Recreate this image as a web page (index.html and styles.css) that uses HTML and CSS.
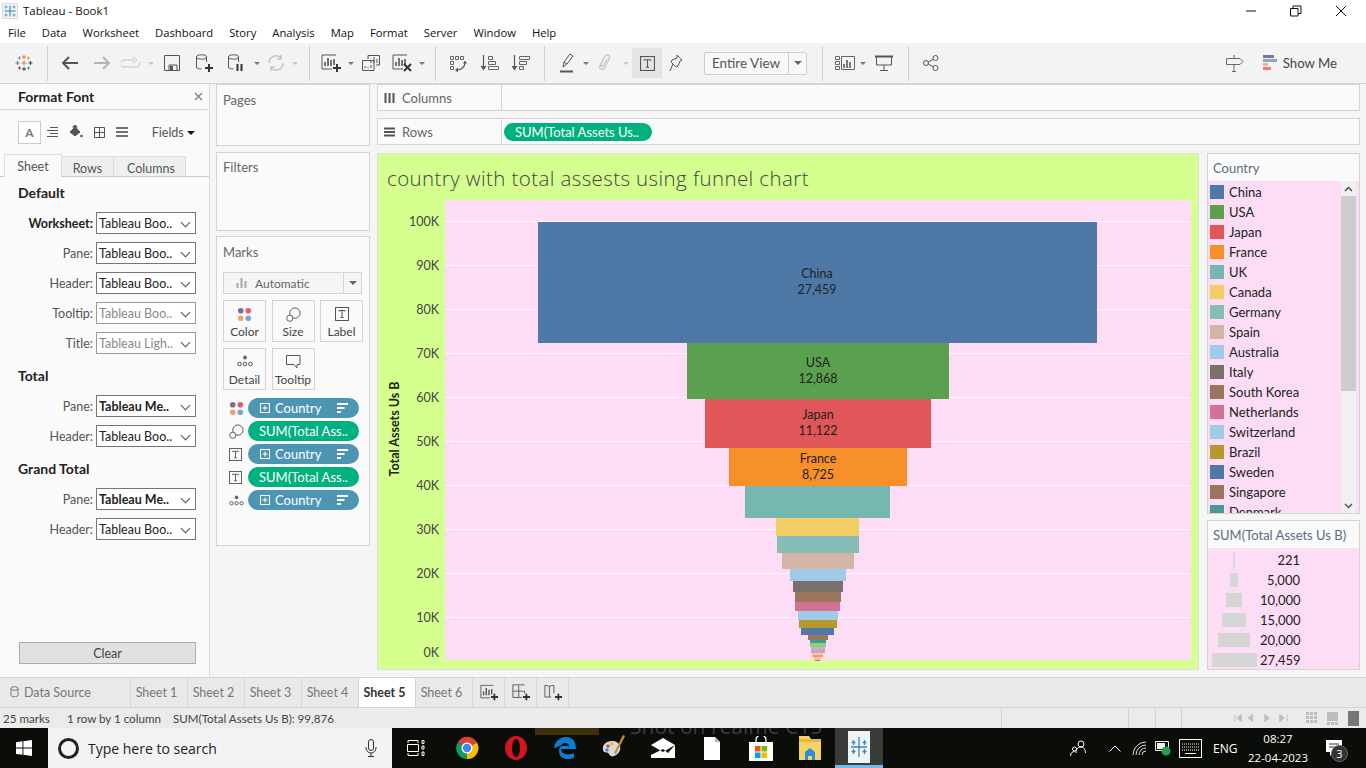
FILE: index.html
```html
<!DOCTYPE html>
<html lang="en">
<head>
    <meta charset="UTF-8">
    <title>Tableau - Book1</title>
    <link rel="stylesheet" href="styles.css">
</head>
<body>
    <!-- shared icons -->
    <svg class="defs" width="0" height="0">
        <symbol id="logo" viewBox="0 0 16 16">
            <rect x=".5" y=".5" width="15" height="15" fill="#eef4f8" stroke="#d5dde2"/>
            <g fill="none" stroke-width="1.100">
                <path d="M8 2.500v11M2.500 8h11" stroke="#3f7fa8"/>
                <path d="M4 2.500v3M2.500 4h3M12 2.500v3M10.500 4h3M4 10.500v3M2.500 12h3M12 10.500v3M10.500 12h3" stroke="#5ea3c4"/>
            </g>
        </symbol>
        <symbol id="logo-color" viewBox="0 0 18 18">
            <g fill="none" stroke-width="1">
                <path d="M9 1v4M7 3h4" stroke="#e8762b"/>
                <path d="M9 6.500v5M6.500 9h5" stroke="#e8762b"/>
                <path d="M9 13v4M7 15h4" stroke="#1f447b"/>
                <path d="M2.500 7v4M.5 9h4" stroke="#59879b"/>
                <path d="M15.500 7v4M13.500 9h4" stroke="#1f447b"/>
                <path d="M4.500 2.500v3M3 4h3" stroke="#7099a6"/>
                <path d="M13.500 2.500v3M12 4h3" stroke="#eb912b"/>
                <path d="M4.500 12.500v3M3 14h3" stroke="#c72035"/>
                <path d="M13.500 12.500v3M12 14h3" stroke="#5b879b"/>
            </g>
        </symbol>
        <symbol id="dots" viewBox="0 0 16 16">
            <circle cx="4" cy="4" r="3" fill="#7b6a94"/>
            <circle cx="12" cy="4" r="3" fill="#e8596b"/>
            <circle cx="4" cy="12" r="3" fill="#f2a16c"/>
            <circle cx="12" cy="12" r="3" fill="#7fa4cf"/>
        </symbol>
        <symbol id="size" viewBox="0 0 16 16">
            <g fill="none" stroke="#555" stroke-width="1">
                <circle cx="9.500" cy="6.500" r="5.500"/>
                <circle cx="4" cy="12" r="3.300" fill="#fafafa"/>
            </g>
        </symbol>
        <symbol id="tbox" viewBox="0 0 14 14">
            <rect x=".5" y=".5" width="13" height="13" fill="none" stroke="#555"/>
            <path d="M4 4.500v-1h6v1M7 3.500v7M5.500 10.500h3" fill="none" stroke="#555"/>
        </symbol>
        <symbol id="detail" viewBox="0 0 16 12">
            <circle cx="8" cy="2.500" r="2" fill="#666"/>
            <g fill="none" stroke="#555">
                <circle cx="2.500" cy="9" r="1.800"/>
                <circle cx="8" cy="9" r="1.800"/>
                <circle cx="13.500" cy="9" r="1.800"/>
            </g>
        </symbol>
        <symbol id="expand" viewBox="0 0 10 10">
            <rect x=".5" y=".5" width="9" height="9" fill="none" stroke="#fff"/>
            <path d="M5 2.500v5M2.500 5h5" stroke="#fff"/>
        </symbol>
        <symbol id="sortbars" viewBox="0 0 11 10">
            <path d="M0 1h11M0 5h7.500M0 9h4" stroke="#fff" stroke-width="2"/>
        </symbol>
        <symbol id="barsheet" viewBox="0 0 20 18">
            <path d="M15 1H1v14h10" fill="none" stroke="#555"/>
            <path d="M4 12V8M7 12V4M10 12V6M13 11V5" stroke="#555" stroke-width="1.600"/>
        </symbol>
        <symbol id="plus" viewBox="0 0 8 8">
            <path d="M4 0v8M0 4h8" stroke="#333" stroke-width="2"/>
        </symbol>
    </svg>

    <header class="titlebar">
        <svg class="title-logo" width="16" height="16"><use href="#logo"/></svg>
        <span class="title-text">Tableau - Book1</span>
        <div class="win-controls">
            <svg width="12" height="12" viewBox="0 0 12 12"><path d="M1 6h10" stroke="#111"/></svg>
            <svg width="12" height="12" viewBox="0 0 12 12"><path d="M.5 3.500h7.500v7.500h-7.500zM3 3.500v-2.500h8v7.500h-3" fill="none" stroke="#111"/></svg>
            <svg width="12" height="12" viewBox="0 0 12 12"><path d="M1 1l10 10M11 1l-10 10" stroke="#111"/></svg>
        </div>
    </header>

    <nav class="menubar">
        <span>File</span><span>Data</span><span>Worksheet</span><span>Dashboard</span><span>Story</span><span>Analysis</span><span>Map</span><span>Format</span><span>Server</span><span>Window</span><span>Help</span>
    </nav>

    <div class="toolbar">
        <div class="tb tb47"><svg width="18" height="18"><use href="#logo-color"/></svg></div>
        <i class="sep"></i>
        <div class="tb-group g1">
            <div class="tb w32"><svg width="18" height="14" viewBox="0 0 18 14"><path d="M17 7H2M8 1L2 7l6 6" fill="none" stroke="#555" stroke-width="2"/></svg></div>
            <div class="tb w32"><svg width="18" height="14" viewBox="0 0 18 14"><path d="M1 7h15M10 1l6 6-6 6" fill="none" stroke="#b5b5b5" stroke-width="2"/></svg></div>
            <div class="tb w26"><svg width="20" height="12" viewBox="0 0 20 12"><path d="M13 3H3a2 2 0 0 0 0 7h13a3 3 0 0 0 2-5M12 0l4 3-4 3" fill="none" stroke="#c4c4c4"/></svg></div>
            <div class="tb w14"><i class="caret off"></i></div>
            <div class="tb w28"><svg width="16" height="16" viewBox="0 0 16 16"><path d="M.5.500h15v15h-15zM5 15V10h8v5" fill="none" stroke="#555"/><rect x="6" y="11" width="3" height="4" fill="#555"/></svg></div>
            <div class="tb w36"><svg width="18" height="18" viewBox="0 0 18 18"><ellipse cx="6.500" cy="3" rx="5" ry="2.200" fill="none" stroke="#555"/><path d="M1.500 3v10c0 1.500 2 2 5 2M11.500 3v5" fill="none" stroke="#555"/><use href="#plus" x="10" y="10" width="8" height="8"/></svg></div>
            <div class="tb w28"><svg width="18" height="18" viewBox="0 0 18 18"><ellipse cx="6.500" cy="3" rx="5" ry="2.200" fill="none" stroke="#555"/><path d="M1.500 3v10c0 1.500 2 2 5 2M11.500 3v5" fill="none" stroke="#555"/><path d="M10.500 10v7M14.500 10v7" stroke="#333" stroke-width="2"/></svg></div>
            <div class="tb w14"><i class="caret"></i></div>
            <div class="tb w24"><svg width="18" height="16" viewBox="0 0 18 16"><path d="M2 8a7 7 0 0 1 12-5M16 8a7 7 0 0 1-12 5M14 0v4h-4M4 16v-4h4" fill="none" stroke="#c4c4c4" stroke-width="1.500"/></svg></div>
            <div class="tb w14"><i class="caret off"></i></div>
        </div>
        <i class="sep"></i>
        <div class="tb-group g2">
            <div class="tb w26"><svg width="20" height="18"><use href="#barsheet"/><use href="#plus" x="12" y="10" width="8" height="8"/></svg></div>
            <div class="tb w14"><i class="caret"></i></div>
            <div class="tb w26"><svg width="18" height="16" viewBox="0 0 18 16"><path d="M6 4V.5h11.500V10H14M.5 5.500H12V15.500H.5z" fill="#f3f3f3" stroke="#555"/><path d="M9 8V5M12 8V2M15 8V4M3 13v-2M6 13v-1M9 13v-3" stroke="#555"/></svg></div>
            <div class="tb w26 ml5"><svg width="20" height="18"><use href="#barsheet"/><path d="M12 10l7 7M19 10l-7 7" stroke="#333" stroke-width="2"/></svg></div>
            <div class="tb w14"><i class="caret"></i></div>
        </div>
        <i class="sep"></i>
        <div class="tb-group g3">
            <div class="tb w32"><svg width="20" height="18" viewBox="0 0 20 18"><path d="M2.500 2.500h3v3h-3zM7.500 2.500h3v3h-3zM12.500 2.500h3v3h-3zM2.500 7.500h3v3h-3zM2.500 12.500h3v3h-3z" fill="none" stroke="#666"/><path d="M17 9c0 4-4 7-8 7" fill="none" stroke="#555" stroke-width="1.200"/><path d="M15 9.500l2-3 2 3zM10 13.500v5l-3-2.500z" fill="#555"/></svg></div>
            <div class="tb w32"><svg width="20" height="18" viewBox="0 0 20 18"><path d="M3.500 1v12" stroke="#555" stroke-width="1.200"/><path d="M.5 12h6l-3 4.500z" fill="#555"/><path d="M8.500 2.500h4v3h-4zM8.500 7.500h7v3h-7zM8.500 12.500h10v3h-10z" fill="none" stroke="#666"/></svg></div>
            <div class="tb w30"><svg width="20" height="18" viewBox="0 0 20 18"><path d="M3.500 1v12" stroke="#555" stroke-width="1.200"/><path d="M.5 12h6l-3 4.500z" fill="#555"/><path d="M8.500 2.500h10v3h-10zM8.500 7.500h7v3h-7zM8.500 12.500h4v3h-4z" fill="none" stroke="#666"/></svg></div>
        </div>
        <i class="sep"></i>
        <div class="tb-group g4">
            <div class="tb w26"><svg width="14" height="20" viewBox="0 0 14 20"><path d="M3 14l1-5 6-8 3 2-6 8zM4 9l3 2" fill="none" stroke="#555"/><path d="M0 18.500h13" stroke="#555" stroke-width="2"/></svg></div>
            <div class="tb w12"><i class="caret"></i></div>
            <div class="tb w26"><svg width="14" height="18" viewBox="0 0 14 18"><path d="M5 5l-3 7c-1 3 3 5 4.500 2l5-10c1-3-3-4-4.500-2L3 10c-1 2 1 3 2.500 1.500L9 5" fill="none" stroke="#c4c4c4" stroke-width="1.200"/></svg></div>
            <div class="tb w12 ml2"><i class="caret off"></i></div>
            <div class="tb tb-active"><svg width="17" height="15"><use href="#tbox"/></svg></div>
            <div class="tb w28"><svg width="14" height="18" viewBox="0 0 14 18"><path d="M8 1l5 5-2 1-2 5-2 1-5-5 1-2 5-2zM4 10l-3 7" fill="none" stroke="#555"/></svg></div>
            <div class="zoom-combo">
                <span class="zoom-label">Entire View</span>
                <span class="zoom-arrow"><i class="caret dark"></i></span>
            </div>
        </div>
        <i class="sep"></i>
        <div class="tb-group g5">
            <div class="tb w24"><svg width="20" height="14" viewBox="0 0 20 14"><path d="M.5.500h4v3h-4zM.5 5.500h4v3h-4zM.5 10.500h4v3h-4zM6.500.5h13v13h-13z" fill="none" stroke="#666"/><path d="M9 12V8M12 12V4M15 12V6" stroke="#555" stroke-width="1.500"/></svg></div>
            <div class="tb w12"><i class="caret"></i></div>
            <div class="tb w30"><svg width="18" height="16" viewBox="0 0 18 16"><path d="M0 1.500h18" stroke="#555" stroke-width="2"/><path d="M1.500 2v8h15V2M9 10v5M5 15.500h8" fill="none" stroke="#555"/></svg></div>
        </div>
        <i class="sep"></i>
        <div class="tb share"><svg width="16" height="16" viewBox="0 0 16 16"><g fill="none" stroke="#555"><circle cx="3" cy="8" r="2.500"/><circle cx="12.500" cy="3" r="2.500"/><circle cx="12.500" cy="13" r="2.500"/><path d="M5.300 7l5-2.800M5.300 9l5 2.800"/></g></svg></div>
        <div class="tb-right">
            <svg width="18" height="17" viewBox="0 0 18 17"><path d="M.5 3.500h13.500l3 3-3 3H.5zM8 0v3.500M8 9.500V16M6 16.500h4" fill="none" stroke="#666"/></svg>
            <div class="show-me">
                <svg width="14" height="16" viewBox="0 0 14 16"><rect width="11" height="3" fill="#8b6f9c"/><rect y="4" width="14" height="3" fill="#85a8d0"/><rect y="8" width="5" height="3" fill="#f4b183"/><rect y="12" width="8" height="3" fill="#f4747f"/></svg>
                <span>Show Me</span>
            </div>
        </div>
    </div>

    <main class="workspace">
        <aside class="format-pane">
            <div class="fmt-head"><b>Format Font</b><svg width="9" height="9" viewBox="0 0 9 9"><path d="M1 1l7 7M8 1L1 8" stroke="#777" stroke-width="1.100"/></svg></div>
            <div class="fmt-tools">
                <span class="fmt-a">A</span>
                <svg width="11" height="10" viewBox="0 0 11 10"><path d="M3 .5h8M0 3.500h11M3 6.500h8M0 9.500h11" stroke="#555"/></svg>
                <svg width="14" height="14" viewBox="0 0 14 14"><path d="M1 7l5-5 5 5-5 4zM4 2.500a2 2 0 0 1 4 0" fill="#555" stroke="#555"/><circle cx="12.500" cy="11" r="1.300" fill="#555"/></svg>
                <svg width="11" height="11" viewBox="0 0 11 11"><path d="M.5.500h10v10H.5zM5.500.5v10M.5 5.500h10" fill="none" stroke="#555"/></svg>
                <svg width="12" height="10" viewBox="0 0 12 10"><path d="M0 1h12M0 5h12M0 9h12" stroke="#444" stroke-width="1.500"/></svg>
                <span class="fmt-fields">Fields <i class="caret black"></i></span>
            </div>
            <div class="fmt-tabs">
                <span class="fmt-tab on">Sheet</span><span class="fmt-tab">Rows</span><span class="fmt-tab">Columns</span>
            </div>

            <h3 class="fmt-title first">Default</h3>
            <div class="fmt-row strong"><label>Worksheet:</label><div class="select">Tableau Boo..</div></div>
            <div class="fmt-row"><label>Pane:</label><div class="select">Tableau Boo..</div></div>
            <div class="fmt-row"><label>Header:</label><div class="select">Tableau Boo..</div></div>
            <div class="fmt-row"><label>Tooltip:</label><div class="select dim">Tableau Boo..</div></div>
            <div class="fmt-row"><label>Title:</label><div class="select dim">Tableau Ligh..</div></div>

            <h3 class="fmt-title">Total</h3>
            <div class="fmt-row"><label>Pane:</label><div class="select bold">Tableau Me..</div></div>
            <div class="fmt-row"><label>Header:</label><div class="select">Tableau Boo..</div></div>

            <h3 class="fmt-title">Grand Total</h3>
            <div class="fmt-row"><label>Pane:</label><div class="select bold">Tableau Me..</div></div>
            <div class="fmt-row"><label>Header:</label><div class="select">Tableau Boo..</div></div>

            <button class="clear-btn">Clear</button>
        </aside>

        <section class="cards">
            <div class="card pages">Pages</div>
            <div class="card filters">Filters</div>
            <div class="card marks">
                <div class="marks-title">Marks</div>
                <div class="mark-type">
                    <svg width="11" height="10" viewBox="0 0 11 10"><path d="M1.500 10V5M5.500 10V0M9.500 10V3" stroke="#aaa" stroke-width="2"/></svg>
                    <span>Automatic</span>
                    <span class="mark-arrow"><i class="caret dark"></i></span>
                </div>
                <div class="mark-btns">
                    <div class="mark-btn"><svg width="15" height="15"><use href="#dots"/></svg><span>Color</span></div>
                    <div class="mark-btn"><svg width="15" height="15"><use href="#size"/></svg><span>Size</span></div>
                    <div class="mark-btn"><svg width="14" height="14"><use href="#tbox"/></svg><span>Label</span></div>
                    <div class="mark-btn"><svg width="16" height="12"><use href="#detail"/></svg><span>Detail</span></div>
                    <div class="mark-btn"><svg width="15" height="14" viewBox="0 0 15 14"><path d="M.5.500h13.500v9h-3v3.500l-3-3.500H.5z" fill="none" stroke="#555"/></svg><span>Tooltip</span></div>
                </div>
                <div class="mark-pills">
                    <div class="mark-row"><svg width="15" height="15"><use href="#dots"/></svg><div class="pill blue"><svg width="10" height="10"><use href="#expand"/></svg><span>Country</span><svg width="11" height="10"><use href="#sortbars"/></svg></div></div>
                    <div class="mark-row"><svg width="15" height="15"><use href="#size"/></svg><div class="pill green"><span>SUM(Total Ass..</span></div></div>
                    <div class="mark-row"><svg width="13" height="13"><use href="#tbox"/></svg><div class="pill blue"><svg width="10" height="10"><use href="#expand"/></svg><span>Country</span><svg width="11" height="10"><use href="#sortbars"/></svg></div></div>
                    <div class="mark-row"><svg width="13" height="13"><use href="#tbox"/></svg><div class="pill green"><span>SUM(Total Ass..</span></div></div>
                    <div class="mark-row"><svg width="15" height="11"><use href="#detail"/></svg><div class="pill blue"><svg width="10" height="10"><use href="#expand"/></svg><span>Country</span><svg width="11" height="10"><use href="#sortbars"/></svg></div></div>
                </div>
            </div>
        </section>

        <section class="sheet-area">
            <div class="shelf columns">
                <div class="shelf-label"><svg width="11" height="10" viewBox="0 0 11 10"><path d="M1.500 0v10M5.500 0v10M9.500 0v10" stroke="#555" stroke-width="2"/></svg>Columns</div>
                <div class="shelf-body"></div>
            </div>
            <div class="shelf rows">
                <div class="shelf-label"><svg width="11" height="10" viewBox="0 0 11 10"><path d="M0 1.500h11M0 5h11M0 8.500h11" stroke="#555" stroke-width="2"/></svg>Rows</div>
                <div class="shelf-body"><div class="pill green wide"><span>SUM(Total Assets Us..</span></div></div>
            </div>
            <div class="viz-row">
                <div class="viz">
                    <div class="viz-title">country with total assests using funnel chart</div>
                    <svg class="chart" width="822" height="470" viewBox="377 200 822 470">
                        <rect x="445" y="200" width="746" height="460" fill="#fddcf5"/>
                        <g stroke="#fff" stroke-opacity=".7">
                            <path d="M445 221.500h746M445 265.500h746M445 309.500h746M445 353.500h746M445 397.500h746M445 441.500h746M445 485.500h746M445 529.500h746M445 573.500h746M445 617.500h746"/>
                        </g>
                        <g class="axis" text-anchor="end">
                            <text x="439" y="226">100K</text>
                            <text x="439" y="270">90K</text>
                            <text x="439" y="314">80K</text>
                            <text x="439" y="358">70K</text>
                            <text x="439" y="402">60K</text>
                            <text x="439" y="446">50K</text>
                            <text x="439" y="490">40K</text>
                            <text x="439" y="534">30K</text>
                            <text x="439" y="578">20K</text>
                            <text x="439" y="622">10K</text>
                            <text x="439" y="657">0K</text>
                        </g>
                        <text class="axis-title" transform="translate(399 429) rotate(-90)" text-anchor="middle">Total Assets Us B</text>
                        <rect x="538" y="222" width="559" height="121" fill="#4e79a7"/>
                        <rect x="687" y="343" width="262" height="56" fill="#59a14f"/>
                        <rect x="705" y="399" width="226" height="49" fill="#e15759"/>
                        <rect x="729" y="448" width="178" height="38" fill="#f78f2b"/>
                        <rect x="745" y="486" width="145" height="32" fill="#76b7b2"/>
                        <rect x="776" y="518" width="83" height="18" fill="#f1ce63"/>
                        <rect x="777" y="536" width="82" height="17" fill="#86bcb6"/>
                        <rect x="782" y="553" width="72" height="16" fill="#d4b5a5"/>
                        <rect x="790" y="569" width="56" height="12" fill="#a0cbe8"/>
                        <rect x="793" y="581" width="50" height="11" fill="#79706e"/>
                        <rect x="795" y="592" width="46" height="10" fill="#9c755f"/>
                        <rect x="795" y="602" width="45" height="9" fill="#d37295"/>
                        <rect x="798" y="611" width="40" height="9" fill="#a0cbe8"/>
                        <rect x="799" y="620" width="38" height="8" fill="#b6992d"/>
                        <rect x="801" y="628" width="33" height="7" fill="#4e79a7"/>
                        <rect x="808" y="635" width="20" height="5" fill="#9c755f"/>
                        <rect x="810" y="640" width="16" height="3" fill="#499894"/>
                        <rect x="810" y="643" width="16" height="4" fill="#8cd17d"/>
                        <rect x="811" y="647" width="14" height="3" fill="#d7a6c0"/>
                        <rect x="811" y="650" width="14" height="3" fill="#bab0ac"/>
                        <rect x="812" y="653" width="11" height="2" fill="#fabfd2"/>
                        <rect x="812" y="655" width="11" height="2" fill="#ff9d4b"/>
                        <rect x="814" y="657" width="7" height="3" fill="#ffbe9d"/>
                        <rect x="815" y="660" width="5" height="1" fill="#b07aa1"/>
                        <g class="bar-label" text-anchor="middle">
                            <text x="817" y="278">China</text><text x="817" y="294">27,459</text>
                            <text x="818" y="367">USA</text><text x="818" y="383">12,868</text>
                            <text x="818" y="419">Japan</text><text x="818" y="435">11,122</text>
                            <text x="818" y="463">France</text><text x="818" y="479">8,725</text>
                        </g>
                    </svg>
                </div>
                <div class="legends">
                    <div class="legend country">
                        <div class="legend-title">Country</div>
                        <div class="legend-body">
                            <ul class="legend-list">
                                <li><i class="sw c1"></i>China</li>
                                <li><i class="sw c2"></i>USA</li>
                                <li><i class="sw c3"></i>Japan</li>
                                <li><i class="sw c4"></i>France</li>
                                <li><i class="sw c5"></i>UK</li>
                                <li><i class="sw c6"></i>Canada</li>
                                <li><i class="sw c7"></i>Germany</li>
                                <li><i class="sw c8"></i>Spain</li>
                                <li><i class="sw c9"></i>Australia</li>
                                <li><i class="sw c10"></i>Italy</li>
                                <li><i class="sw c11"></i>South Korea</li>
                                <li><i class="sw c12"></i>Netherlands</li>
                                <li><i class="sw c9"></i>Switzerland</li>
                                <li><i class="sw c13"></i>Brazil</li>
                                <li><i class="sw c1"></i>Sweden</li>
                                <li><i class="sw c11"></i>Singapore</li>
                                <li><i class="sw c14"></i>Denmark</li>
                            </ul>
                            <div class="scrollbar">
                                <span class="sb-btn"><svg width="9" height="6" viewBox="0 0 9 6"><path d="M1 5l3.500-3.500L8 5" fill="none" stroke="#555" stroke-width="1.500"/></svg></span>
                                <span class="sb-thumb"></span>
                                <span class="sb-track"></span>
                                <span class="sb-btn"><svg width="9" height="6" viewBox="0 0 9 6"><path d="M1 1l3.500 3.500L8 1" fill="none" stroke="#555" stroke-width="1.500"/></svg></span>
                            </div>
                        </div>
                    </div>
                    <div class="legend sizes">
                        <div class="legend-title">SUM(Total Assets Us B)</div>
                        <div class="size-body">
                            <div class="size-row"><span class="size-cell"><i class="s1"></i></span><span class="size-val">221</span></div>
                            <div class="size-row"><span class="size-cell"><i class="s2"></i></span><span class="size-val">5,000</span></div>
                            <div class="size-row"><span class="size-cell"><i class="s3"></i></span><span class="size-val">10,000</span></div>
                            <div class="size-row"><span class="size-cell"><i class="s4"></i></span><span class="size-val">15,000</span></div>
                            <div class="size-row"><span class="size-cell"><i class="s5"></i></span><span class="size-val">20,000</span></div>
                            <div class="size-row"><span class="size-cell"><i class="s6"></i></span><span class="size-val">27,459</span></div>
                        </div>
                    </div>
                </div>
            </div>
        </section>
    </main>

    <div class="tabbar">
        <div class="tab source"><svg width="9" height="12" viewBox="0 0 9 12"><ellipse cx="4.500" cy="2.500" rx="3.500" ry="1.800" fill="none" stroke="#777"/><path d="M1 2.500v7c0 1.500 7 1.500 7 0v-7" fill="none" stroke="#777"/></svg>Data Source</div>
        <div class="tab">Sheet 1</div>
        <div class="tab">Sheet 2</div>
        <div class="tab">Sheet 3</div>
        <div class="tab">Sheet 4</div>
        <div class="tab active">Sheet 5</div>
        <div class="tab">Sheet 6</div>
        <div class="tab icon"><svg width="18" height="17" viewBox="0 0 20 18"><use href="#barsheet"/><use href="#plus" x="12" y="10" width="8" height="8"/></svg></div>
        <div class="tab icon"><svg width="18" height="17" viewBox="0 0 20 18"><path d="M14 .5H1v14h10M7.500 1v13M1 7.500h13V10" fill="none" stroke="#555"/><use href="#plus" x="12" y="10" width="8" height="8"/></svg></div>
        <div class="tab icon"><svg width="18" height="17" viewBox="0 0 20 18"><path d="M1 1l5 1 5-1v9M1 1v13h7M6 2v12" fill="none" stroke="#555"/><use href="#plus" x="12" y="10" width="8" height="8"/></svg></div>
    </div>

    <div class="statusbar">
        <span class="st-marks">25 marks</span>
        <span class="st-dims">1 row by 1 column</span>
        <span>SUM(Total Assets Us B): 99,876</span>
        <div class="st-cells">
            <i class="st-cell a"></i><i class="st-cell b"></i><i class="st-cell b"></i><i class="st-cell c"></i>
            <div class="st-nav">
                <svg width="56" height="10" viewBox="0 0 60 10"><path d="M1 1v8M8 1L3 5l5 4zM20 1l-5 4 5 4zM33 1l5 4-5 4zM49 1l5 4-5 4zM57 1v8" fill="#c0c0c0" stroke="#c0c0c0"/></svg>
            </div>
            <div class="st-views">
                <svg width="11" height="12" viewBox="0 0 11 12"><path d="M0 1.500h11M0 5.500h11M0 9.500h11" stroke="#bdbdbd" stroke-width="3" stroke-dasharray="3 1"/></svg>
                <svg width="11" height="13" viewBox="0 0 11 13"><rect width="11" height="9" fill="#bdbdbd"/><path d="M0 11.500h11" stroke="#bdbdbd" stroke-width="3" stroke-dasharray="3 1"/></svg>
                <svg width="11" height="15"><rect width="11" height="15" fill="#777"/></svg>
            </div>
        </div>
    </div>

    <footer class="taskbar">
        <div class="wall-text">Shot on realme C15</div>
        <i class="wall-tag"></i>
        <div class="start"><svg width="16" height="16" viewBox="0 0 16 16"><path d="M0 2.200l6.500-.9v6.300H0zM7.400 1.200L16 0v7.600H7.400zM0 8.500h6.500v6.300L0 13.900zM7.400 8.500H16V16l-8.600-1.200z" fill="#fff"/></svg></div>
        <div class="search">
            <span class="cortana"></span>
            <span class="search-text">Type here to search</span>
            <svg class="mic" width="12" height="18" viewBox="0 0 12 18"><rect x="3.500" y=".5" width="5" height="11" rx="2.500" fill="none" stroke="#333"/><path d="M1 8v1a5 5 0 0 0 10 0V8M6 14v3M3 17.500h6" fill="none" stroke="#333"/></svg>
        </div>
        <div class="task-icons">
            <div class="task w48"><svg width="18" height="16" viewBox="0 0 18 16"><path d="M1 3V.5h10V3M1 13v2.500h10V13M.5 4.500h11v7H.5zM15 .5h2v3h-2zM15 6h2v3h-2zM15 12h2v3.500h-2z" fill="none" stroke="#fff"/></svg></div>
            <div class="task"><svg width="24" height="24" viewBox="0 0 24 24"><path d="M12 12L3 6a11 11 0 0 1 19 .5z" fill="#db4437"/><path d="M12 12l10-5.500A11 11 0 0 1 12 23z" fill="#fbbc05"/><path d="M12 12v11A11 11 0 0 1 3 6z" fill="#0f9d58"/><circle cx="12" cy="12" r="5.500" fill="#fff"/><circle cx="12" cy="12" r="4.200" fill="#4285f4"/></svg></div>
            <div class="task"><svg width="22" height="24" viewBox="0 0 22 24"><path fill-rule="evenodd" d="M11 0c6 0 11 5.400 11 12s-5 12-11 12S0 18.600 0 12 5 0 11 0zm0 3C8.500 3 7 7 7 12s1.500 9 4 9 4-4 4-9-1.500-9-4-9z" fill="#d4141e"/></svg></div>
            <div class="task"><svg width="22" height="22" viewBox="0 0 22 22"><path d="M0 11C1 4 6 0 12 0c6 0 10 4 10 12H7c0 5 7 7 13 4v5c-8 3-15 0-15-7 0-3 2-5 3-6-4 1-6 3-8 3zM7 9h8c0-4-7-4-8 0z" fill="#0c7cd5"/></svg></div>
            <div class="task"><svg width="24" height="26" viewBox="0 0 24 26"><path d="M10 6C4 6 0 10 1 15c1 4 5 1 6 4 1 2 3 3 5 2 5-2 7-6 6-10-1-3-4-5-8-5z" fill="#dcdcdc"/><circle cx="6" cy="11" r="1.800" fill="#e04b3c"/><circle cx="10" cy="9" r="1.800" fill="#f2b632"/><circle cx="5" cy="15" r="1.800" fill="#3b8fd8"/><path d="M21 0l2 1-9 18-2-1z" fill="#c98b3c"/></svg></div>
            <div class="task"><svg width="24" height="20" viewBox="0 0 24 20"><path d="M0 7l12-7 12 7v13H0z" fill="#fff"/><path d="M0 7l12 7 12-7-7 8-5-4-12 6z" fill="#111"/></svg></div>
            <div class="task"><svg width="16" height="23" viewBox="0 0 16 23"><path d="M0 0h11l5 5v18H0z" fill="#fff"/><path d="M11 0v5h5" fill="#bbb"/></svg></div>
            <div class="task"><svg width="24" height="25" viewBox="0 0 24 25"><path d="M7 7V4a5 5 0 0 1 10 0v3" fill="none" stroke="#fff" stroke-width="1.300"/><rect y="6" width="24" height="19" fill="#fff"/><rect x="6" y="10" width="5.500" height="5.500" fill="#f25022"/><rect x="12.500" y="10" width="5.500" height="5.500" fill="#7fba00"/><rect x="6" y="16.500" width="5.500" height="5.500" fill="#00a4ef"/><rect x="12.500" y="16.500" width="5.500" height="5.500" fill="#ffb900"/></svg></div>
            <div class="task"><svg width="22" height="24" viewBox="0 0 22 24"><path d="M0 0h10l2 3h10v21H0z" fill="#f6d365"/><path d="M0 3h22v3H0z" fill="#e8b93a"/><path d="M6 16l5-4 5 4v8h-3v-4H9v4H6z" fill="#2b8fd8"/></svg></div>
            <div class="task active"><svg width="22" height="32" viewBox="0 0 22 32"><rect width="22" height="32" fill="#eef3f6"/><g fill="none" stroke="#3f86b3" stroke-width="1.300"><path d="M11 6v20M3 16h16M5.500 9v5M3.500 11.500h4M16.500 9v5M14.500 11.500h4M5.500 18v5M3.500 20.500h4M16.500 18v5M14.500 20.500h4"/></g></svg></div>
        </div>
        <div class="tray">
            <svg class="t-people" width="16" height="17" viewBox="0 0 16 17"><g fill="none" stroke="#fff"><circle cx="11" cy="4" r="3"/><path d="M6 13c0-4 2-6 5-6s4 2 4.500 6"/><circle cx="4.500" cy="9" r="2"/><path d="M.5 16c0-3 2-4.500 4-4.500"/></g></svg>
            <svg class="t-up" width="12" height="7" viewBox="0 0 12 7"><path d="M.5 6.500L6 1l5.500 5.500" fill="none" stroke="#fff"/></svg>
            <svg class="t-wifi" width="14" height="16" viewBox="0 0 14 16"><path d="M1 15a13 13 0 0 1 13-13M4 15a10 10 0 0 1 10-10M7 15a7 7 0 0 1 7-7M10 15a4 4 0 0 1 4-4" fill="none" stroke="#ddd"/></svg>
            <svg class="t-batt" width="16" height="16" viewBox="0 0 16 16"><path d="M.5 1.500h13v9H.5z" fill="#111" stroke="#eee"/><rect x="2" y="3" width="8" height="6" fill="#eee"/><circle cx="11" cy="11" r="4.500" fill="#1ca54a"/></svg>
            <svg class="t-kbd" width="23" height="19" viewBox="0 0 23 19"><path d="M.5.500h22v18H.5z" fill="none" stroke="#fff"/><path d="M3 5h17M3 8h17M3 11h17" stroke="#fff" stroke-dasharray="1 1"/><path d="M6 14.500h11" stroke="#fff"/></svg>
            <span class="t-lang">ENG</span>
            <div class="t-clock"><span>08:27</span><span>22-04-2023</span></div>
            <div class="t-notif">
                <svg width="16" height="17" viewBox="0 0 16 17"><path d="M0 0h16v12H8l-4 4v-4H0z" fill="#fff"/><path d="M3 4h10M3 7h10" stroke="#333"/></svg>
                <span class="badge">3</span>
            </div>
        </div>
    </footer>
</body>
</html>
```

FILE: styles.css
```css
* {
    box-sizing: border-box;
}
html, body {
    margin: 0;
    padding: 0;
    height: 768px;
    overflow: hidden;
}
body {
    width: 1366px;
    display: flex;
    flex-direction: column;
    background-color: #f5f5f5;
    color: #333;
    font-family: "Lato", "Noto Sans", sans-serif;
    font-size: 12.500px;
}
svg {
    display: block;
    flex: none;
}
i {
    display: block;
    font-style: normal;
}
.defs {
    position: absolute;
}

/* window chrome */
.titlebar {
    height: 21px;
    flex: none;
    display: flex;
    align-items: center;
    background-color: #fff;
    font-family: "Open Sans", sans-serif;
    font-size: 11.500px;
    color: #111;
    padding-left: 2px;
}
.title-logo {
    margin-right: 5px;
}
.win-controls {
    margin-left: auto;
    display: flex;
    align-items: center;
    padding-right: 19px;
    gap: 33px;
    padding-top: 1px;
}
.menubar {
    height: 22px;
    flex: none;
    display: flex;
    align-items: center;
    gap: 16px;
    padding-left: 8px;
    background-color: #fff;
    font-family: "Open Sans", sans-serif;
    font-size: 11.250px;
    color: #111;
}

/* toolbar */
.toolbar {
    height: 41px;
    flex: none;
    display: flex;
    align-items: center;
    background-color: #f3f3f3;
    border-bottom: 1px solid #d4d4d4;
}
.sep {
    width: 1px;
    height: 35px;
    background-color: #d0d0d0;
    flex: none;
}
.tb-group {
    display: flex;
    align-items: center;
}
.g1 { padding: 0 7px 0 6px; }
.g2 { padding: 0 6px 0 8px; }
.g3 { padding: 0 8px 0 6px; }
.g4 { padding: 0 15px 0 9px; }
.g5 { padding: 0 9px 0 10px; }
.tb {
    display: flex;
    align-items: center;
    justify-content: center;
    height: 30px;
    flex: none;
}
.tb47 { width: 47px; }
.w12 { width: 12px; }
.w14 { width: 14px; }
.w24 { width: 24px; }
.w26 { width: 26px; }
.w28 { width: 28px; }
.w30 { width: 30px; }
.w32 { width: 32px; }
.w36 { width: 36px; }
.ml2 { margin-left: 2px; }
.ml5 { margin-left: 5px; }
.tb-active {
    width: 30px;
    background-color: #e4e4e4;
}
.share {
    width: 44px;
}
.caret {
    width: 0;
    height: 0;
    border-left: 3px solid transparent;
    border-right: 3px solid transparent;
    border-top: 3px solid #777;
}
.caret.off {
    border-top-color: #c6c6c6;
}
.caret.dark {
    border-left-width: 4px;
    border-right-width: 4px;
    border-top: 4px solid #666;
}
.caret.black {
    display: inline-block;
    border-left-width: 4px;
    border-right-width: 4px;
    border-top: 4px solid #111;
    vertical-align: 2px;
}
.zoom-combo {
    width: 103px;
    height: 23px;
    margin-left: 14px;
    display: flex;
    background-color: #f8f8f8;
    border: 1px solid #cfcfcf;
    border-radius: 2px;
    color: #555;
}
.zoom-label {
    flex: 1;
    padding-left: 7px;
    line-height: 20px;
    font-size: 13.500px;
}
.zoom-arrow {
    width: 18px;
    border-left: 1px solid #cfcfcf;
    display: flex;
    align-items: center;
    justify-content: center;
}
.tb-right {
    margin-left: auto;
    display: flex;
    align-items: center;
    gap: 19px;
    padding-right: 29px;
}
.show-me {
    display: flex;
    align-items: center;
    gap: 6px;
    color: #444;
    font-size: 13.200px;
}

/* main area */
.workspace {
    flex: 1;
    display: flex;
    min-height: 0;
    border-bottom: 1px solid #d4d4d4;
}
.format-pane {
    width: 210px;
    flex: none;
    display: flex;
    flex-direction: column;
    background-color: #fafafa;
    border-right: 1px solid #dcdcdc;
}
.fmt-head {
    height: 26px;
    flex: none;
    display: flex;
    align-items: center;
    justify-content: space-between;
    padding: 0 6px 0 18px;
    border-bottom: 1px solid #d9d9d9;
    font-size: 14px;
    color: #222;
}
.fmt-tools {
    height: 44px;
    flex: none;
    display: flex;
    align-items: center;
    padding-left: 18px;
    gap: 11px;
}
.fmt-a {
    width: 23px;
    height: 23px;
    margin-right: -5.500px;
    border: 1px solid #ccc;
    text-align: center;
    line-height: 22px;
    font-weight: 700;
    font-size: 12px;
    color: #777;
    background-color: #fff;
}
.fmt-fields {
    margin-left: auto;
    padding-right: 14px;
    color: #555;
    white-space: nowrap;
}
.fmt-tabs {
    height: 23px;
    flex: none;
    display: flex;
    align-items: flex-end;
    padding-left: 4px;
    border-bottom: 1px solid #ccc;
}
.fmt-tab {
    height: 20px;
    line-height: 23px;
    padding: 0 12px;
    background-color: #efefef;
    border: 1px solid #ddd;
    border-bottom: none;
    border-left: none;
    color: #555;
}
.fmt-tab:nth-child(2) { width: 52px; padding: 0; text-align: center; }
.fmt-tab:nth-child(3) { width: 72px; padding: 0 0 0 3px; text-align: center; }
.fmt-tab.on {
    width: 58px;
    height: 23px;
    padding: 0;
    margin-bottom: -1px;
    line-height: 24px;
    text-align: center;
    background-color: #fafafa;
    border: 1px solid #ddd;
    border-bottom: none;
}
.fmt-title {
    margin: 8px 0 5px 18px;
    height: 20px;
    line-height: 20px;
    font-size: 14px;
    font-weight: 700;
    color: #222;
}
.fmt-title.first {
    margin-top: 6px;
}
.fmt-row {
    height: 30px;
    flex: none;
    display: flex;
    align-items: center;
}
.fmt-row label {
    width: 93px;
    text-align: right;
    color: #555;
}
.fmt-row.strong label {
    color: #222;
    font-weight: 700;
}
.select {
    width: 100px;
    height: 22px;
    margin-left: 3px;
    padding-left: 2px;
    line-height: 21px;
    position: relative;
    background-color: #fff;
    border: 1px solid #767676;
    color: #222;
}
.select::after {
    content: "";
    position: absolute;
    right: 6px;
    top: 6px;
    width: 6px;
    height: 6px;
    border-right: 1px solid #555;
    border-bottom: 1px solid #555;
    transform: rotate(45deg);
}
.select.dim {
    color: #888;
    border-color: #9a9a9a;
}
.select.bold {
    font-weight: 700;
}
.clear-btn {
    margin: auto 0 13px 19px;
    width: 177px;
    height: 22px;
    background-color: #e1e1e1;
    border: 1px solid #adadad;
    font-family: inherit;
    font-size: 12.500px;
    color: #444;
}

/* pages, filters, marks */
.cards {
    width: 154px;
    flex: none;
    margin: 0 7px 0 6px;
    display: flex;
    flex-direction: column;
}
.card {
    background-color: #fafafa;
    border: 1px solid #d4d4d4;
    color: #666;
    padding: 7px 6px;
    font-size: 13px;
}
.pages { height: 62px; margin-bottom: 6px; }
.filters { height: 79px; margin-bottom: 5px; padding-top: 6px; }
.marks { height: 310px; padding-top: 6px; }
.marks-title {
    height: 18px;
    line-height: 18px;
}
.mark-type {
    height: 22px;
    margin-top: 11px;
    display: flex;
    align-items: center;
    padding-left: 12px;
    gap: 8px;
    background-color: #f5f5f5;
    border: 1px solid #d4d4d4;
    font-size: 12px;
    color: #666;
    width: 139px;
}
.mark-arrow {
    margin-left: auto;
    width: 18px;
    height: 100%;
    border-left: 1px solid #d4d4d4;
    display: flex;
    align-items: center;
    justify-content: center;
}
.mark-btns {
    margin-top: 6px;
    display: grid;
    grid-template-columns: repeat(3, 43px);
    column-gap: 5.500px;
    row-gap: 6px;
}
.mark-btn {
    height: 42px;
    display: flex;
    flex-direction: column;
    align-items: center;
    justify-content: space-between;
    padding: 6px 0 2px;
    border: 1px solid #d4d4d4;
    font-size: 12px;
    color: #444;
}
.mark-pills {
    margin-top: 8px;
    padding: 0 4px 0 6px;
    display: flex;
    flex-direction: column;
    gap: 3px;
}
.mark-row {
    height: 20px;
    display: flex;
    align-items: center;
    justify-content: space-between;
}
.pill {
    height: 20px;
    width: 111px;
    border-radius: 10px;
    display: flex;
    align-items: center;
    color: #fff;
    font-size: 13px;
}
.pill.blue {
    background-color: #4e95b4;
    padding: 0 11px 0 12px;
}
.pill.blue span {
    flex: 1;
    padding-left: 5px;
}
.pill.green {
    background-color: #00b180;
    padding-left: 11px;
    white-space: nowrap;
}
.pill.wide {
    width: 148px;
    height: 18px;
}

/* shelves and view */
.sheet-area {
    flex: 1;
    min-width: 0;
    padding-right: 6px;
    display: flex;
    flex-direction: column;
}
.shelf {
    height: 27px;
    flex: none;
    display: flex;
    background-color: #fafafa;
    border: 1px solid #d4d4d4;
    color: #666;
    font-size: 13px;
}
.rows {
    margin-top: 7px;
}
.shelf-label {
    width: 124px;
    display: flex;
    align-items: center;
    gap: 7px;
    padding-left: 6px;
    border-right: 1px solid #d4d4d4;
}
.shelf-body {
    flex: 1;
    display: flex;
    align-items: center;
    padding-left: 2px;
}
.viz-row {
    margin-top: 8px;
    display: flex;
    gap: 8px;
}
.viz {
    width: 822px;
    height: 517px;
    background-color: #d5ff8f;
    border: 1px solid #dcdcdc;
    overflow: hidden;
    flex: none;
}
.viz-title {
    height: 46px;
    padding: 10px 0 0 9px;
    font-family: "Open Sans", "Lato", sans-serif;
    font-size: 20.500px;
    font-weight: 300;
    line-height: 28px;
    letter-spacing: .4px;
    color: #444;
}
.chart {
    margin-left: -1px;
}
.axis {
    font-size: 12.500px;
    fill: #444;
    font-family: "Lato", sans-serif;
}
.axis-title {
    font-size: 12.500px;
    font-weight: 700;
    fill: #222;
}
.bar-label {
    font-size: 12.500px;
    fill: #222;
}

/* legends */
.legends {
    flex: 1;
    display: flex;
    flex-direction: column;
    gap: 6px;
}
.legend {
    background-color: #fafafa;
    border: 1px solid #d4d4d4;
    color: #222;
    overflow: hidden;
    font-size: 13px;
}
.legend-title {
    height: 27px;
    line-height: 28px;
    padding-left: 5px;
    color: #5d6d7e;
}
.country { height: 361px; }
.sizes { height: 150px; }
.legend-body {
    height: 332px;
    display: flex;
    background-color: #fddcf5;
}
.legend-list {
    list-style: none;
    margin: 0;
    padding: 1px 0 0 2px;
    flex: 1;
    overflow: hidden;
}
.legend-list li {
    height: 20px;
    display: flex;
    align-items: center;
    gap: 5px;
}
.sw {
    width: 14px;
    height: 14px;
}
.c1 { background-color: #4e79a7; }
.c2 { background-color: #59a14f; }
.c3 { background-color: #e15759; }
.c4 { background-color: #f78f2b; }
.c5 { background-color: #76b7b2; }
.c6 { background-color: #f1ce63; }
.c7 { background-color: #86bcb6; }
.c8 { background-color: #d4b5a5; }
.c9 { background-color: #a0cbe8; }
.c10 { background-color: #79706e; }
.c11 { background-color: #9c755f; }
.c12 { background-color: #d37295; }
.c13 { background-color: #b6992d; }
.c14 { background-color: #499894; }
.scrollbar {
    width: 15px;
    margin-right: 3px;
    display: flex;
    flex-direction: column;
    background-color: #f0f0f0;
}
.sb-btn {
    height: 15px;
    flex: none;
    display: flex;
    align-items: center;
    justify-content: center;
}
.sb-thumb {
    height: 195px;
    flex: none;
    background-color: #cdcdcd;
}
.sb-track {
    flex: 1;
}
.size-body {
    height: 122px;
    background-color: #fddcf5;
    padding-top: 2px;
}
.size-row {
    height: 20px;
    display: flex;
    align-items: center;
}
.size-cell {
    width: 52px;
    display: flex;
    justify-content: center;
}
.size-cell i {
    height: 14px;
    background-color: #d6d6d6;
}
.s1 { width: 2px; }
.s2 { width: 8px; }
.s3 { width: 16px; }
.s4 { width: 24px; }
.s5 { width: 32px; }
.s6 { width: 45px; }
.size-val {
    width: 40px;
    text-align: right;
}

/* sheet tabs and status */
.tabbar {
    height: 30px;
    flex: none;
    display: flex;
    background-color: #e9e9e9;
    border-bottom: 1px solid #d4d4d4;
    color: #777;
}
.tab {
    width: 57px;
    padding: 0 5px 1px 0;
    display: flex;
    align-items: center;
    justify-content: center;
    border-right: 1px solid #d6d6d6;
}
.tab.source {
    width: 131px;
    justify-content: flex-start;
    padding-left: 10px;
    gap: 5px;
}
.tab.active {
    background-color: #fff;
    color: #333;
    font-weight: 700;
}
.tab.icon {
    width: 32px;
    padding: 0;
}
.statusbar {
    height: 20px;
    flex: none;
    display: flex;
    align-items: center;
    padding-left: 3px;
    background-color: #ebebeb;
    font-size: 11.600px;
    color: #444;
}
.st-marks { width: 64px; }
.st-dims { width: 106px; }
.st-cells {
    margin-left: auto;
    height: 100%;
    display: flex;
    align-items: center;
}
.st-cell {
    height: 100%;
    border-left: 1px solid #d4d4d4;
}
.st-cell.a { width: 127px; }
.st-cell.b { width: 26.500px; }
.st-cell.c { width: 48px; }
.st-nav {
    width: 77px;
    height: 100%;
    padding-left: 5px;
    display: flex;
    align-items: center;
}
.st-views {
    display: flex;
    align-items: center;
    gap: 10px;
    padding-right: 7px;
}

/* windows taskbar */
.taskbar {
    height: 40px;
    flex: none;
    display: flex;
    position: relative;
    overflow: hidden;
    background-color: #0a0d08;
    color: #fff;
    font-family: "Open Sans", sans-serif;
}
.wall-text {
    position: absolute;
    left: 630px;
    top: -14px;
    font-size: 21px;
    line-height: 24px;
    color: #3e3e3a;
    white-space: nowrap;
}
.wall-tag {
    position: absolute;
    left: 535px;
    top: 0;
    width: 64px;
    height: 7px;
    background-color: #3d2f0a;
}
.start {
    width: 48px;
    display: flex;
    align-items: center;
    justify-content: center;
}
.search {
    width: 344px;
    background-color: #f3f3f3;
    display: flex;
    align-items: center;
    color: #222;
    font-size: 14px;
    position: relative;
    z-index: 1;
}
.cortana {
    width: 21px;
    height: 21px;
    margin: 0 9px 0 10px;
    border: 3px solid #222;
    border-radius: 50%;
}
.mic {
    margin-left: auto;
    margin-right: 15px;
}
.task-icons {
    display: flex;
    position: relative;
    z-index: 1;
}
.task {
    width: 49px;
    display: flex;
    align-items: center;
    justify-content: center;
}
.task.w48 {
    width: 50px;
    padding-right: 2px;
}
.task.active {
    width: 48px;
    background-color: #3a3c3a;
    border-bottom: 3px solid #76b9ed;
    margin-left: 1px;
}
.tray {
    margin-left: auto;
    display: flex;
    align-items: center;
    position: relative;
    z-index: 1;
}
.t-up { margin-left: 23px; }
.t-wifi { margin-left: 11px; }
.t-batt { margin-left: 9px; }
.t-kbd { margin-left: 8px; }
.t-lang {
    margin-left: 11px;
    font-size: 12px;
    width: 24px;
}
.t-clock {
    width: 62px;
    margin-left: 10px;
    display: flex;
    flex-direction: column;
    align-items: center;
    gap: 5px;
    font-size: 11.500px;
    line-height: 14px;
    white-space: nowrap;
}
.t-notif {
    width: 46px;
    margin: 0 9px 0 2px;
    height: 100%;
    position: relative;
    display: flex;
    align-items: center;
    justify-content: center;
}
.badge {
    position: absolute;
    left: 20px;
    top: 17px;
    width: 17px;
    height: 17px;
    border-radius: 50%;
    background-color: #333;
    border: 1px solid #666;
    text-align: center;
    font-size: 11px;
    line-height: 15px;
}
```
